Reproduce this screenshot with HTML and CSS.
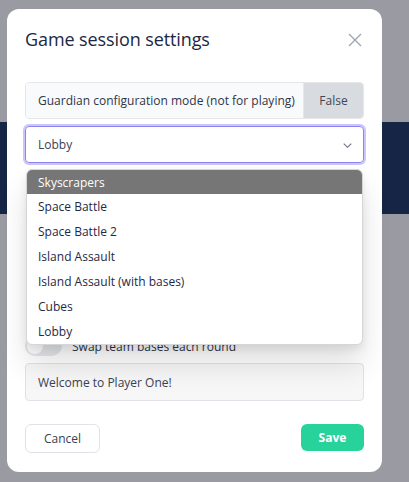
FILE: index.html
```html
<!DOCTYPE html>
<html>
<head>
<meta charset="utf-8">
<link rel="stylesheet" href="styles.css">
</head>
<body>
<div class="page">
  <div class="page-top"></div>
  <div class="page-band"></div>
</div>
<div class="modal">
  <div class="modal-header">
    <h2 class="title">Game session settings</h2>
    <svg class="close" width="14" height="14" viewBox="0 0 14 14"><path d="M1 1L13 13M13 1L1 13" stroke="#9ca3af" stroke-width="1.3" fill="none"/></svg>
  </div>
  <div class="guardian">
    <span class="guardian-label">Guardian configuration mode (not for playing)</span>
    <span class="guardian-value">False</span>
  </div>
  <div class="select-wrap">
    <div class="select">
      <span>Lobby</span>
      <svg class="chevron" width="9" height="5" viewBox="0 0 9 5"><path d="M0.7 0.7L4.5 4.3L8.3 0.7" stroke="#6b7280" stroke-width="1.1" fill="none"/></svg>
    </div>
    <ul class="menu">
      <li class="active">Skyscrapers</li>
      <li>Space Battle</li>
      <li>Space Battle 2</li>
      <li>Island Assault</li>
      <li>Island Assault (with bases)</li>
      <li>Cubes</li>
      <li>Lobby</li>
    </ul>
  </div>
  <div class="hidden-space"></div>
  <div class="toggle-row">
    <span class="toggle"><span class="knob"></span></span>
    <span class="toggle-label">Swap team bases each round</span>
  </div>
  <div class="input">Welcome to Player One!</div>
  <div class="actions">
    <button class="btn cancel">Cancel</button>
    <button class="btn save">Save</button>
  </div>
</div>
</body>
</html>
```
FILE: styles.css
```css
* { box-sizing: border-box; }
html, body { margin: 0; padding: 0; }
body {
  background: #9a9aa2;
  font-family: "Open Sans", "Noto Sans", sans-serif;
  width: 409px;
  height: 482px;
  overflow: hidden;
  position: relative;
}
.page-top { height: 122px; }
.page-band { height: 92px; background: #162446; }

.modal {
  position: absolute;
  left: 7px;
  top: 9px;
  width: 375px;
  height: 463px;
  background: #fff;
  border-radius: 12px;
  padding: 16px 18px 19px 18px;
  display: flex;
  flex-direction: column;
}
.modal-header {
  display: flex;
  align-items: center;
  justify-content: space-between;
  height: 28px;
}
.title {
  margin: 0;
  font-size: 18px;
  font-weight: 400;
  color: #1b2843;
  letter-spacing: -0.1px;
}
.close { margin-right: 2px; margin-top: 2px; }

.guardian {
  margin-top: 29px;
  height: 37px;
  display: flex;
  border: 1px solid #e5e7eb;
  border-radius: 4px;
  overflow: hidden;
  font-size: 12px;
}
.guardian-label {
  flex: 1;
  background: #f9fafb;
  color: #2e3548;
  display: flex;
  align-items: center;
  padding-left: 12px;
}
.guardian-value {
  width: 60px;
  background: #d8dbe0;
  color: #3f4756;
  display: flex;
  align-items: center;
  justify-content: center;
  border-left: 1px solid #e5e7eb;
}

.select-wrap { position: relative; margin-top: 7px; }
.select {
  height: 37px;
  border: 1px solid #8c82f2;
  box-shadow: 0 0 0 2px #cbc5fb;
  border-radius: 4px;
  display: flex;
  align-items: center;
  justify-content: space-between;
  padding: 0 11px 0 12px;
  font-size: 12px;
  color: #3a4252;
}
.chevron { margin-top: 1px; }
.menu {
  position: absolute;
  left: 1px;
  top: 43px;
  width: 337px;
  margin: 0;
  padding: 0;
  list-style: none;
  background: #fff;
  border: 1px solid #d4d6da;
  border-radius: 6px;
  overflow: hidden;
  box-shadow: 0 20px 30px rgba(0,0,0,0.12), 0 4px 8px rgba(0,0,0,0.08);
  z-index: 5;
}
.menu li {
  height: 25px;
  display: flex;
  align-items: center;
  padding-left: 11px;
  font-size: 12px;
  color: #1f2945;
}
.menu li.active {
  background: #767676;
  color: #fff;
}
.menu li:first-child { height: 24px; }

.hidden-space { height: 173px; }
.toggle-row {
  display: flex;
  align-items: center;
  height: 20px;
  gap: 10px;
}
.toggle {
  width: 37px;
  height: 20px;
  border-radius: 10px;
  background: #e5e7eb;
  position: relative;
}
.knob {
  position: absolute;
  left: 2px;
  top: 2px;
  width: 16px;
  height: 16px;
  border-radius: 50%;
  background: #fff;
}
.toggle-label { font-size: 12px; color: #2e3548; }

.input {
  margin-top: 7px;
  height: 38px;
  border: 1px solid #dfe2e7;
  border-radius: 4px;
  background: #f7f7f8;
  display: flex;
  align-items: center;
  padding-left: 12px;
  font-size: 12px;
  color: #3a4252;
}
.actions {
  margin-top: auto;
  display: flex;
  justify-content: space-between;
  align-items: flex-start;
}
.btn {
  font-family: inherit;
  font-size: 12px;
  border-radius: 6px;
  cursor: pointer;
}
.cancel {
  width: 75px;
  height: 29px;
  background: #fff;
  border: 1px solid #dfe2e7;
  color: #3a4252;
}
.save {
  width: 63px;
  height: 27px;
  background: #27d39b;
  border: none;
  color: #fff;
  font-weight: 700;
}
```
